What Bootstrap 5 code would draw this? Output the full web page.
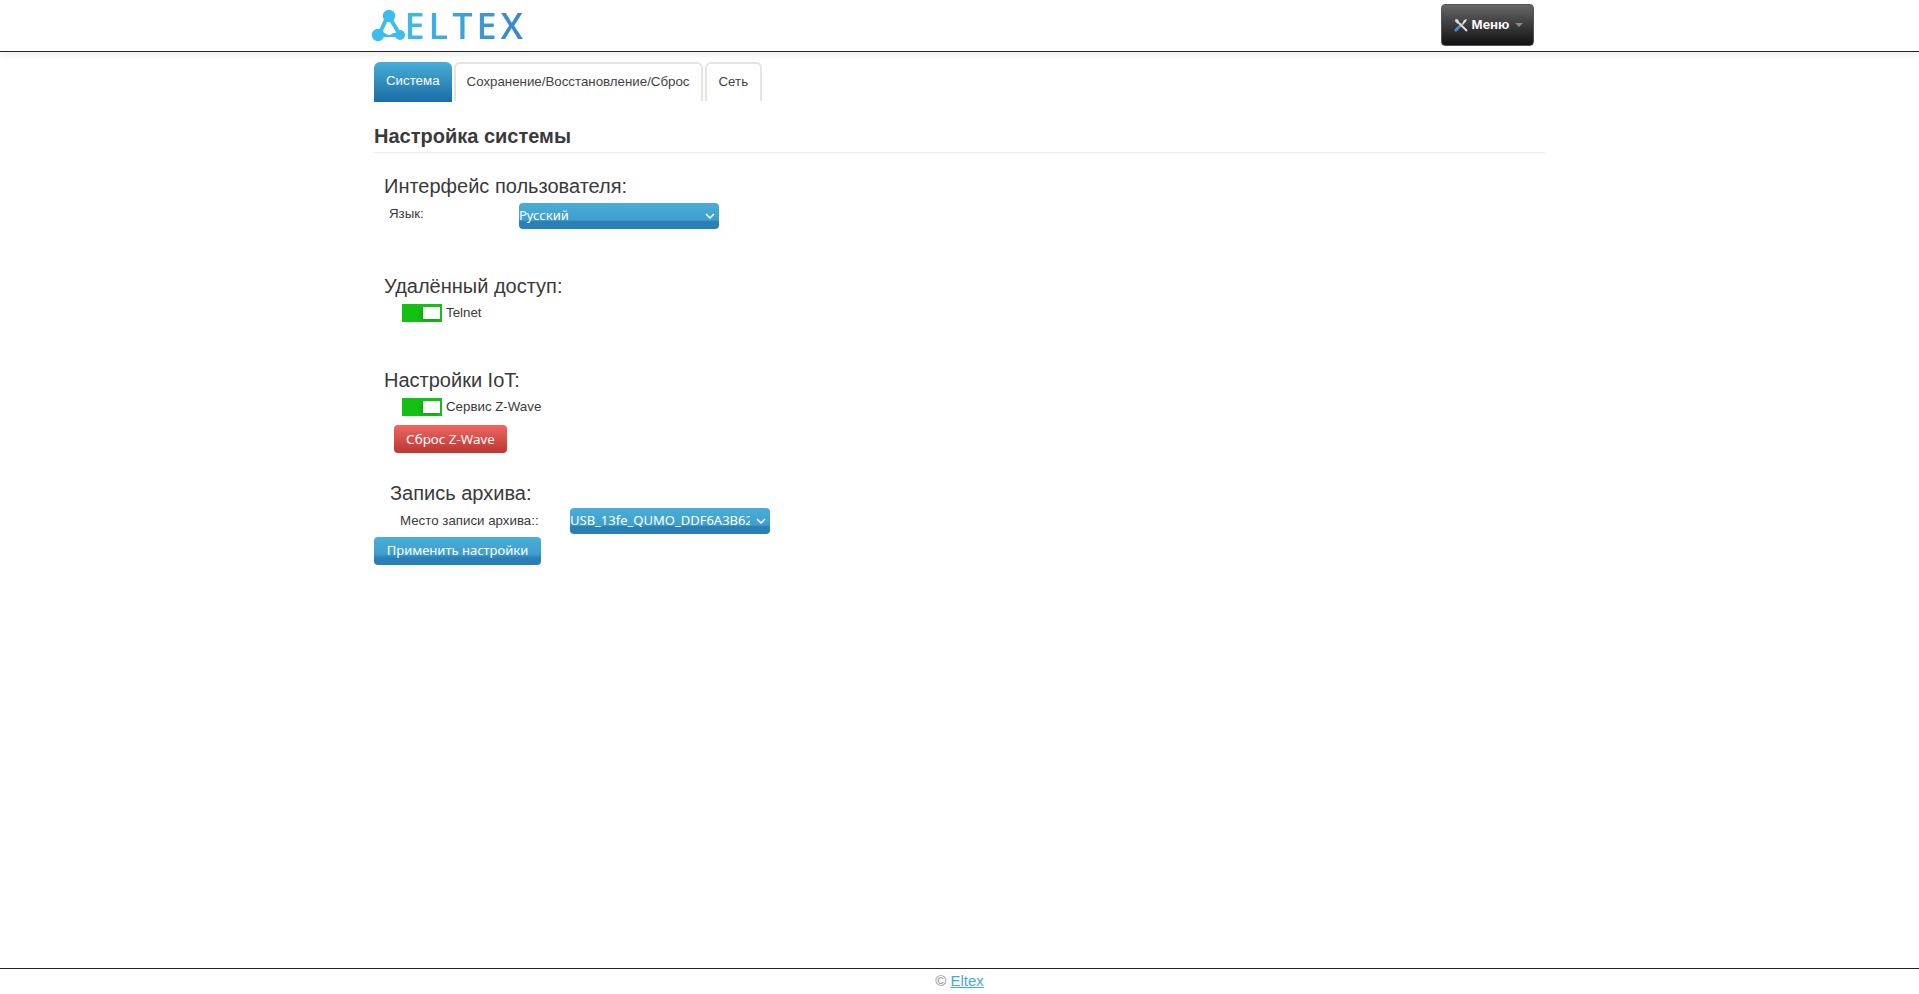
<!DOCTYPE html>
<html lang="ru">
<head>
<meta charset="utf-8">
<title>Eltex</title>
<link href="https://cdn.jsdelivr.net/npm/bootstrap@5.3.0/dist/css/bootstrap.min.css" rel="stylesheet">
<style>
body{font-family:"Liberation Sans",Arial,sans-serif;font-size:14px;color:#3a3a3a;background:#fff;min-height:994px;}
.top-head{height:52px;border-bottom:1px solid #222;box-shadow:0 3px 8px rgba(0,0,0,.07);}
.wrap-main{width:1171px;margin:0 auto;}
.head-inner{width:1188px;margin:0 auto;height:51px;padding:4px 20px 0 5px;}
.logo-box{margin-top:5px;height:33px;}
.logo-word{font-family:"Open Sans",sans-serif;font-weight:600;font-size:36px;line-height:33px;letter-spacing:4px;background:linear-gradient(90deg,#3dbdee,#3a84c6);-webkit-background-clip:text;background-clip:text;color:transparent;}
.menu-btn{width:93px;height:42px;border:1px solid #555;border-radius:4px;background:linear-gradient(#666,#111);color:#fff;font-weight:700;font-size:13.3px;padding:0 0 0 3px;gap:4px;}
.menu-caret{width:0;height:0;border-left:4px solid transparent;border-right:4px solid transparent;border-top:4px solid #888;margin-left:2px;}
.tab-row{margin-top:10px;gap:2px;height:40px;align-items:flex-start;}
.tab-item{display:block;height:39px;border:2px solid #e4e4e4;border-bottom:0;border-radius:6px 6px 0 0;padding:9px 12px 0;color:#444;font-size:13.3px;line-height:18px;text-decoration:none;}
.tab-mid{padding:9px 11px 0;}
.tab-on{height:40px;border:0;background:linear-gradient(#48aed8,#1a6ca5);color:#fff;padding:10px 12px 0;}
.page-title{font-size:20px;font-weight:700;line-height:26px;margin:21px 0 0;padding-bottom:3px;border-bottom:1px solid #eee;}
.sec-title{font-size:20px;font-weight:400;line-height:24px;margin:0;}
.sec-one{margin:21px 0 0 10px;}
.lang-row{margin:5px 0 0 15px;}
.lbl-a{width:130px;font-size:13.3px;line-height:20px;padding-top:1px;}
.blue-sel{width:200px;height:26px;border:0;border-radius:4px;padding:0 20px 0 0;color:#fff;font-family:"Noto Sans",sans-serif;font-size:13px;outline:0;appearance:none;-webkit-appearance:none;
background:url("data:image/svg+xml,%3Csvg xmlns='http://www.w3.org/2000/svg' width='10' height='6'%3E%3Cpath d='M1 1l4 4 4-4' fill='none' stroke='%23fff' stroke-width='1.5'/%3E%3C/svg%3E") no-repeat right 4px center,linear-gradient(#49aed8 0,#3f9fcc 65%,#2a80b6 72%,#2a80b6 100%);}
.sec-two{margin:45px 0 0 10px;}
.tog-row{margin:6px 0 0 28px;gap:4px;height:18px;}
.tog{display:block;width:40px;height:18px;background:#14c014;padding:3px;}
.tog-knob{display:block;width:17px;height:12px;background:#fff;margin-left:18px;box-shadow:-2px 2px 3px rgba(0,0,0,.15);}
.tog-lbl{font-size:13.3px;line-height:18px;}
.sec-three{margin:46px 0 0 10px;}
.red-btn{display:block;width:113px;height:28px;margin:9px 0 0 20px;padding:0;border:0;border-radius:4px;color:#fff;font-family:"Noto Sans",sans-serif;font-size:13.4px;background:linear-gradient(#ef6662,#bd3632);}
.sec-four{margin:28px 0 0 16px;}
.arch-row{margin:3px 0 0 26px;}
.lbl-b{width:170px;font-size:13.3px;line-height:20px;}
.apply-btn{display:block;width:167px;height:28px;margin:3px 0 0;padding:0;border:0;border-radius:4px;color:#fff;font-family:"Noto Sans",sans-serif;font-size:13px;background:linear-gradient(#49aed8 0,#3f9fcc 60%,#2a80b6 75%,#2a80b6 100%);}
.foot-bar{margin-top:auto;height:26px;border-top:1px solid #222;text-align:center;font-size:15px;line-height:24px;color:#888;}
.foot-bar a{color:#4aa8d6;}
</style>
</head>
<body class="d-flex flex-column">
<header class="top-head">
  <div class="head-inner d-flex justify-content-between align-items-start">
    <a class="logo-box d-flex align-items-center text-decoration-none" href="#">
      <svg width="34" height="33" viewBox="0 0 34 33" aria-hidden="true">
        <path d="M17 6 8 26M17 6 29 26M8 26 29 26" stroke="#3dbdee" stroke-width="4" fill="none"/>
        <circle cx="18" cy="7" r="6.2" fill="#3dbdee"/>
        <circle cx="7" cy="26" r="6.2" fill="#3dbdee"/>
        <circle cx="29" cy="26" r="5" fill="#3dbdee"/>
        <circle cx="18" cy="21" r="5" fill="#fff"/>
      </svg>
      <span class="logo-word">ELTEX</span>
    </a>
    <button class="menu-btn d-flex align-items-center justify-content-center" type="button">
      <svg width="14" height="14" viewBox="0 0 14 14" aria-hidden="true">
        <path d="M1 13 8 6" stroke="#4a8fd0" stroke-width="2.5"/>
        <path d="M13 13 5 5" stroke="#ddd" stroke-width="2"/>
        <path d="M1.5 1 4 1.5 5.5 5 4 6 1 3.5Z" fill="#ddd"/>
        <path d="M8 6 10 2 13 1 12 3.5 9 7Z" fill="#ddd"/>
      </svg>
      <span>Меню</span><span class="menu-caret"></span>
    </button>
  </div>
</header>
<main class="wrap-main">
  <nav class="tab-row d-flex">
    <a class="tab-item tab-on" href="#">Система</a>
    <a class="tab-item tab-mid" href="#">Сохранение/Восстановление/Сброс</a>
    <a class="tab-item" href="#">Сеть</a>
  </nav>
  <h1 class="page-title">Настройка системы</h1>

  <h2 class="sec-title sec-one">Интерфейс пользователя:</h2>
  <div class="lang-row d-flex align-items-start">
    <span class="lbl-a">Язык:</span>
    <select class="blue-sel"><option>Русский</option></select>
  </div>

  <h2 class="sec-title sec-two">Удалённый доступ:</h2>
  <div class="tog-row d-flex align-items-center">
    <span class="tog"><span class="tog-knob"></span></span>
    <span class="tog-lbl">Telnet</span>
  </div>

  <h2 class="sec-title sec-three">Настройки IoT:</h2>
  <div class="tog-row d-flex align-items-center">
    <span class="tog"><span class="tog-knob"></span></span>
    <span class="tog-lbl">Сервис Z-Wave</span>
  </div>
  <button class="red-btn" type="button">Сброс Z-Wave</button>

  <h2 class="sec-title sec-four">Запись архива:</h2>
  <div class="arch-row d-flex align-items-center">
    <span class="lbl-b">Место записи архива::</span>
    <select class="blue-sel"><option>USB_13fe_QUMO_DDF6A3B62</option></select>
  </div>
  <button class="apply-btn" type="button">Применить настройки</button>
</main>
<footer class="foot-bar">© <a href="#">Eltex</a></footer>
<script src="https://cdn.jsdelivr.net/npm/bootstrap@5.3.0/dist/js/bootstrap.bundle.min.js"></script>
</body>
</html>
